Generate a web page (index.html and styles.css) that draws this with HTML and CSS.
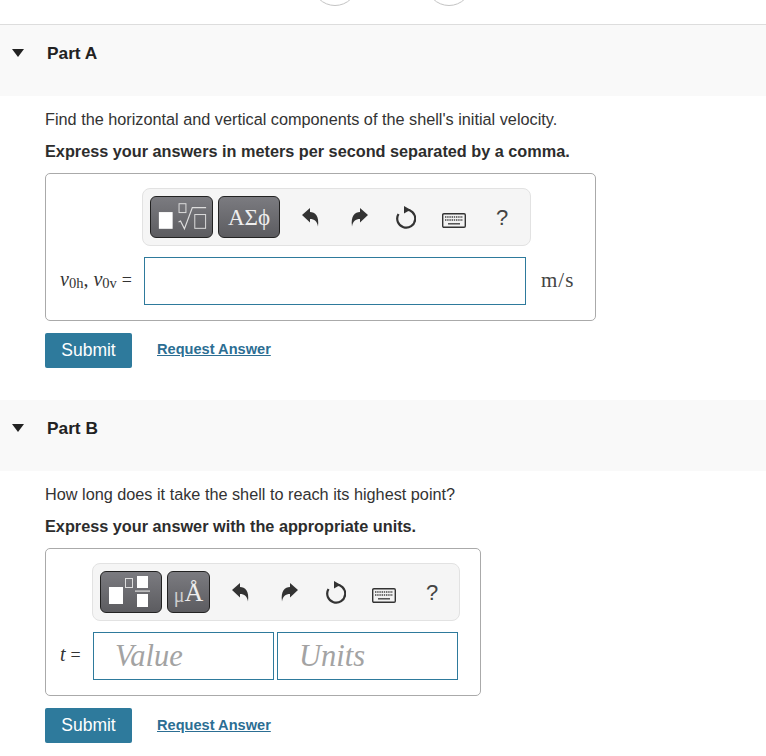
FILE: index.html
```html
<!DOCTYPE html>
<html lang="en">
<head>
    <meta charset="UTF-8">
    <meta name="viewport" content="width=device-width, initial-scale=1.0">
    <title>Projectile Parts</title>
    <link rel="stylesheet" href="styles.css">
</head>
<body>
    <svg class="icon-defs" aria-hidden="true">
        <symbol id="icon-undo" viewBox="0 0 18 19">
            <path d="M0 7 L8 0 V4 C13 4 17.500 8 16 18.500 C15 13 12.500 11 8 11 V14.500 Z"/>
        </symbol>
        <symbol id="icon-redo" viewBox="0 0 18 19">
            <path d="M18 7 L10 0 V4 C5 4 .5 8 2 18.500 C3 13 5.500 11 10 11 V14.500 Z"/>
        </symbol>
        <symbol id="icon-reset" viewBox="0 0 20 24">
            <path d="M2.500 9 A9 9 0 1 0 9 4.700" fill="none" stroke="#333" stroke-width="2.200"/>
            <path d="M8 1 L14.500 4.700 L8 8.500 Z"/>
        </symbol>
        <symbol id="icon-keyboard" viewBox="0 0 24 15">
            <rect x=".7" y=".7" width="22.600" height="13.600" rx="1.200" fill="#f2f2f2" stroke="#333" stroke-width="1.400"/>
            <path d="M3 4h18M3 7h18" stroke="#444" stroke-width="1.600" stroke-dasharray="1.400 .8"/>
            <path d="M6 10.800h12" stroke="#444" stroke-width="1.400"/>
        </symbol>
    </svg>

    <nav class="top-nav">
        <span class="nav-circle"></span>
        <span class="nav-circle"></span>
    </nav>

    <section class="part">
        <header class="part-head">
            <span class="caret"></span>
            <h2>Part A</h2>
        </header>
        <div class="part-body">
            <p class="question">Find the horizontal and vertical components of the shell's initial velocity.</p>
            <p class="hint">Express your answers in meters per second separated by a comma.</p>
            <div class="answer-box box-a">
                <div class="toolbar toolbar-a">
                    <button class="tool-btn btn-templates" type="button">
                        <svg width="62" height="40" viewBox="0 0 62 40" aria-hidden="true">
                            <rect x="8" y="15" width="14" height="17" fill="#fff"/>
                            <rect x="28.500" y="6.500" width="7" height="9" fill="none" stroke="#ddd" stroke-width="1"/>
                            <path d="M28 25 L30 24 L34 32 L42 10.500 H56" fill="none" stroke="#ddd" stroke-width="1.200"/>
                            <rect x="44.500" y="17.500" width="11" height="14" fill="none" stroke="#ddd" stroke-width="1"/>
                        </svg>
                    </button>
                    <button class="tool-btn btn-symbols" type="button">ΑΣϕ</button>
                    <div class="tool-icons">
                        <svg class="ic-arrow"><use href="#icon-undo"/></svg>
                        <svg class="ic-arrow"><use href="#icon-redo"/></svg>
                        <svg class="ic-reset"><use href="#icon-reset"/></svg>
                        <svg class="ic-keyboard"><use href="#icon-keyboard"/></svg>
                        <span class="ic-help">?</span>
                    </div>
                </div>
                <div class="entry-row">
                    <span class="math-label"><i>v</i><sub>0h</sub>, <i>v</i><sub>0v</sub> <span class="eq">=</span></span>
                    <input class="entry entry-wide" type="text">
                    <span class="unit">m/s</span>
                </div>
            </div>
            <div class="actions">
                <button class="submit" type="button">Submit</button>
                <a class="request" href="#">Request Answer</a>
            </div>
        </div>
    </section>

    <section class="part">
        <header class="part-head">
            <span class="caret"></span>
            <h2>Part B</h2>
        </header>
        <div class="part-body">
            <p class="question">How long does it take the shell to reach its highest point?</p>
            <p class="hint">Express your answer with the appropriate units.</p>
            <div class="answer-box box-b">
                <div class="toolbar toolbar-b">
                    <button class="tool-btn btn-units" type="button">
                        <svg width="60" height="40" viewBox="0 0 60 40" aria-hidden="true">
                            <rect x="8" y="15" width="14" height="17" fill="#fff"/>
                            <rect x="24.500" y="6.500" width="7" height="9" fill="none" stroke="#ddd" stroke-width="1"/>
                            <rect x="36" y="4" width="11" height="12" fill="#fff"/>
                            <rect x="34" y="18.500" width="15" height="1.200" fill="#ddd"/>
                            <rect x="36" y="22" width="11" height="13" fill="#fff"/>
                        </svg>
                    </button>
                    <button class="tool-btn btn-mu" type="button"><small>μ</small>Å</button>
                    <div class="tool-icons">
                        <svg class="ic-arrow"><use href="#icon-undo"/></svg>
                        <svg class="ic-arrow"><use href="#icon-redo"/></svg>
                        <svg class="ic-reset"><use href="#icon-reset"/></svg>
                        <svg class="ic-keyboard"><use href="#icon-keyboard"/></svg>
                        <span class="ic-help">?</span>
                    </div>
                </div>
                <div class="entry-row">
                    <span class="math-label label-t"><i>t</i> <span class="eq">=</span></span>
                    <input class="entry entry-value" type="text" placeholder="Value">
                    <input class="entry entry-units" type="text" placeholder="Units">
                </div>
            </div>
            <div class="actions">
                <button class="submit" type="button">Submit</button>
                <a class="request" href="#">Request Answer</a>
            </div>
        </div>
    </section>
</body>
</html>
```

FILE: styles.css
```css
body {
    font-family: 'Liberation Sans', Arial, sans-serif;
    font-size: 16.25px;
    color: #2d2d2d;
    background-color: #fff;
    margin: 0;
    padding: 0;
}

.icon-defs {
    display: none;
}

.top-nav {
    height: 24px;
    border-bottom: 1px solid #ddd;
    overflow: hidden;
    display: flex;
    align-items: flex-end;
    gap: 68px;
    padding-left: 312px;
}

.nav-circle {
    flex: none;
    width: 44px;
    height: 44px;
    margin-bottom: 18px;
    border: 1px solid #c4c4c4;
    border-radius: 50%;
}

.part-head {
    height: 71px;
    background-color: #f9f9f9;
    display: flex;
    align-items: flex-start;
    padding-left: 12px;
    box-sizing: border-box;
}

.part-head h2 {
    margin: 19px 0 0 23px;
    font-size: 17.3px;
    line-height: 19px;
    font-weight: bold;
    color: #222;
}

.caret {
    width: 0;
    height: 0;
    margin-top: 24px;
    border-left: 6.5px solid transparent;
    border-right: 6.5px solid transparent;
    border-top: 8px solid #222;
}

.part-body {
    padding: 14px 0 32px 45px;
}

.question {
    margin: 0;
    line-height: 18px;
    color: #333;
}

.hint {
    margin: 14px 0 13px;
    line-height: 18px;
    font-weight: bold;
    color: #2d2d2d;
}

.answer-box {
    box-sizing: border-box;
    height: 148px;
    border: 1px solid #aaa;
    border-radius: 5px;
    padding-top: 14px;
}

.box-a {
    width: 551px;
}

.box-b {
    width: 436px;
}

.toolbar {
    box-sizing: border-box;
    height: 58px;
    background-color: #f5f5f5;
    border: 1px solid #e2e2e2;
    border-radius: 8px;
    display: flex;
    align-items: center;
    padding-left: 7px;
    gap: 5px;
}

.toolbar-a {
    width: 389px;
    margin-left: 96px;
}

.toolbar-b {
    width: 368px;
    margin-left: 46px;
}

.tool-btn {
    height: 42px;
    padding: 0;
    border: 1px solid #222;
    border-radius: 6px;
    background: linear-gradient(#7b7b80, #5c5c60);
    color: #eee;
    font-family: 'Liberation Serif', serif;
    display: flex;
    align-items: center;
    justify-content: center;
}

.btn-templates {
    width: 63px;
}

.btn-units {
    width: 62px;
}

.btn-symbols {
    width: 62px;
    font-size: 23px;
    padding-top: 2px;
}

.btn-mu {
    width: 43px;
    font-size: 26px;
    padding-top: 2px;
}

.btn-mu small {
    font-size: 20px;
    padding-top: 5px;
    color: #ccc;
}

.tool-icons {
    display: flex;
    align-items: center;
    margin-left: 17px;
    gap: 30px;
    color: #333;
    fill: #333;
}

.ic-arrow {
    width: 18px;
    height: 19px;
}

.ic-reset {
    width: 20px;
    height: 24px;
    margin-left: -2px;
}

.ic-keyboard {
    width: 24px;
    height: 15px;
    margin-left: -4px;
    margin-top: 6px;
}

.ic-help {
    font-size: 22px;
    line-height: 24px;
    margin-top: 2px;
    color: #444;
}

.entry-row {
    display: flex;
    align-items: center;
    margin-top: 11px;
}

.math-label {
    font-family: 'Liberation Serif', serif;
    font-size: 20px;
    color: #333;
    white-space: nowrap;
    padding-left: 14px;
    margin-top: -3px;
}

.box-a .math-label {
    width: 84px;
}

.label-t {
    width: 33px;
}

.math-label sub {
    font-size: 14.5px;
    line-height: 0;
    vertical-align: -2px;
}

.eq {
    font-size: 18px;
}

.entry {
    box-sizing: border-box;
    height: 48px;
    margin: 0;
    padding-top: 2px;
    border: 1px solid #2e7a9c;
    border-radius: 0;
    background-color: #fff;
    outline: none;
    font-family: 'Liberation Serif', serif;
    font-style: italic;
    font-size: 30.5px;
}

.entry::placeholder {
    color: #a3a3a3;
    opacity: 1;
}

.entry-wide {
    width: 382px;
}

.entry-value {
    width: 181px;
    padding-left: 21px;
}

.entry-units {
    width: 181px;
    margin-left: 3px;
    padding-left: 21px;
}

.unit {
    font-family: 'Liberation Serif', serif;
    font-size: 21px;
    letter-spacing: 1px;
    color: #444;
    margin-left: 15px;
    margin-top: -2px;
}

.actions {
    display: flex;
    align-items: center;
    margin-top: 12px;
}

.submit {
    width: 87px;
    height: 35px;
    padding: 0;
    border: none;
    border-radius: 2px;
    background-color: #2e7a9c;
    color: #fff;
    font-family: 'Liberation Sans', Arial, sans-serif;
    font-size: 17.5px;
}

.request {
    margin-left: 25px;
    margin-top: -1px;
    font-size: 14.6px;
    font-weight: bold;
    color: #2c6e93;
}

.box-a + .actions .request {
    margin-top: -3px;
}
```
